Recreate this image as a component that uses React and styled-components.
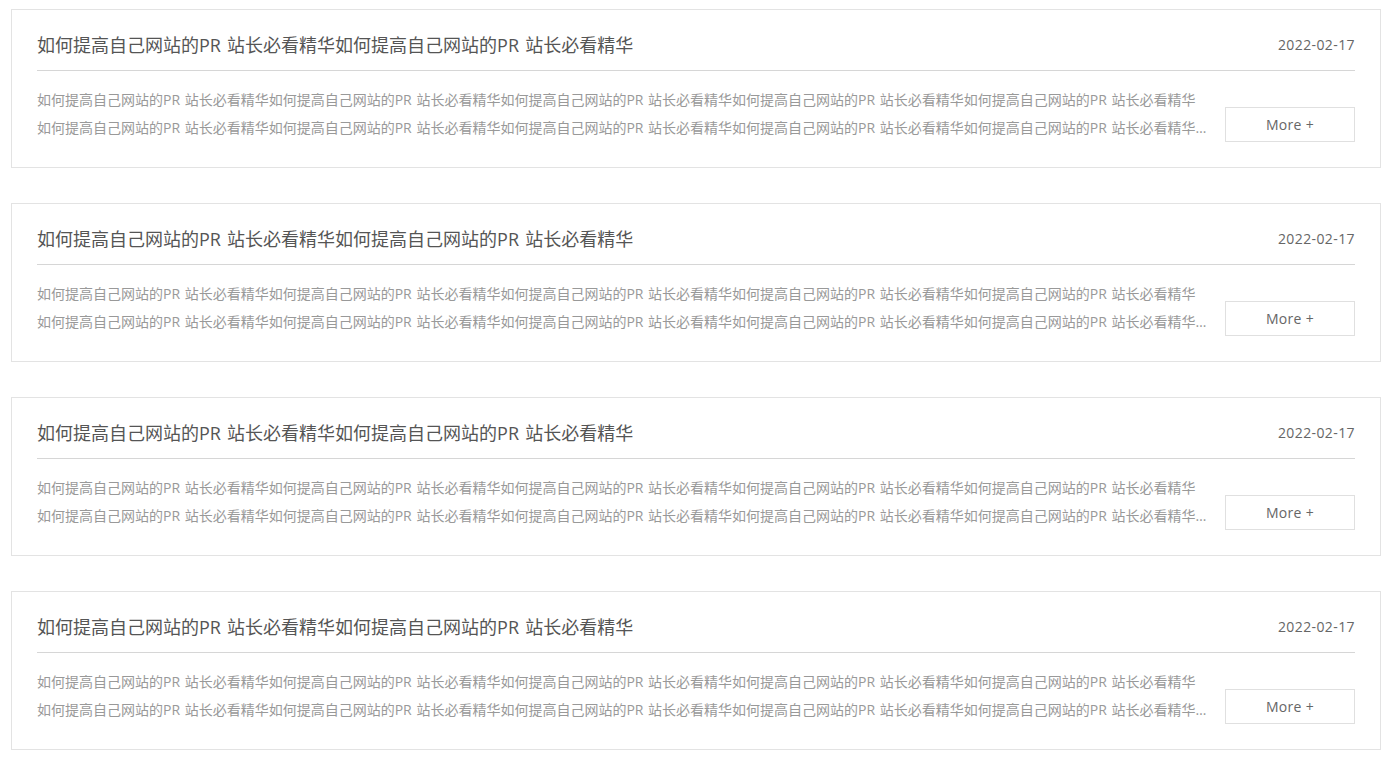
import React from 'react';
import styled, { createGlobalStyle } from 'styled-components';

const GlobalStyle = createGlobalStyle`
    html, body {
        margin: 0;
        padding: 0;
        background: #fff;
    }
    body {
        font-family: "Open Sans", "Noto Sans CJK SC", sans-serif;
    }
`;

const TITLE = '如何提高自己网站的PR 站长必看精华如何提高自己网站的PR 站长必看精华';
const SUMMARY = Array(12).fill('如何提高自己网站的PR 站长必看精华').join('');

const news = [1, 2, 3, 4].map((id) => ({
    id,
    title: TITLE,
    date: '2022-02-17',
    summary: SUMMARY,
}));

const App = () => (
    <>
        <GlobalStyle />
        <List>
            {news.map((item) => (
                <Card key={item.id}>
                    <Header>
                        <Title>{item.title}</Title>
                        <DateText>{item.date}</DateText>
                    </Header>
                    <Body>
                        <Summary>{item.summary}</Summary>
                        <MoreButton type="button">More +</MoreButton>
                    </Body>
                </Card>
            ))}
        </List>
    </>
);

const List = styled.div`
    display: flex;
    flex-direction: column;
    gap: 35px;
    padding: 9px 10px 0 11px;
`;

const Card = styled.div`
    border: 1px solid #e3e3e3;
    padding: 0 25px 25px;
    background: #fff;
`;

const Header = styled.div`
    display: flex;
    justify-content: space-between;
    align-items: center;
    padding: 20px 0 10px;
    border-bottom: 1px solid #d6d6d6;
`;

const Title = styled.h3`
    margin: 0;
    font-size: 18px;
    font-weight: 400;
    line-height: 30px;
    word-spacing: 1.5px;
    color: #555;
`;

const DateText = styled.span`
    font-size: 14px;
    line-height: 30px;
    letter-spacing: 0.4px;
    color: #666;
`;

const Body = styled.div`
    display: flex;
    align-items: flex-end;
    justify-content: space-between;
    gap: 16px;
    margin-top: 15px;
`;

const Summary = styled.p`
    margin: 0;
    width: 1172px;
    font-size: 14px;
    line-height: 28px;
    word-spacing: 1px;
    color: #999;
    display: -webkit-box;
    -webkit-line-clamp: 2;
    -webkit-box-orient: vertical;
    overflow: hidden;
`;

const MoreButton = styled.button`
    flex: 0 0 130px;
    height: 35px;
    border: 1px solid #e0e0e0;
    background: #fff;
    font-family: inherit;
    font-size: 14px;
    letter-spacing: 0.3px;
    color: #666;
    cursor: pointer;
`;

export default App;
